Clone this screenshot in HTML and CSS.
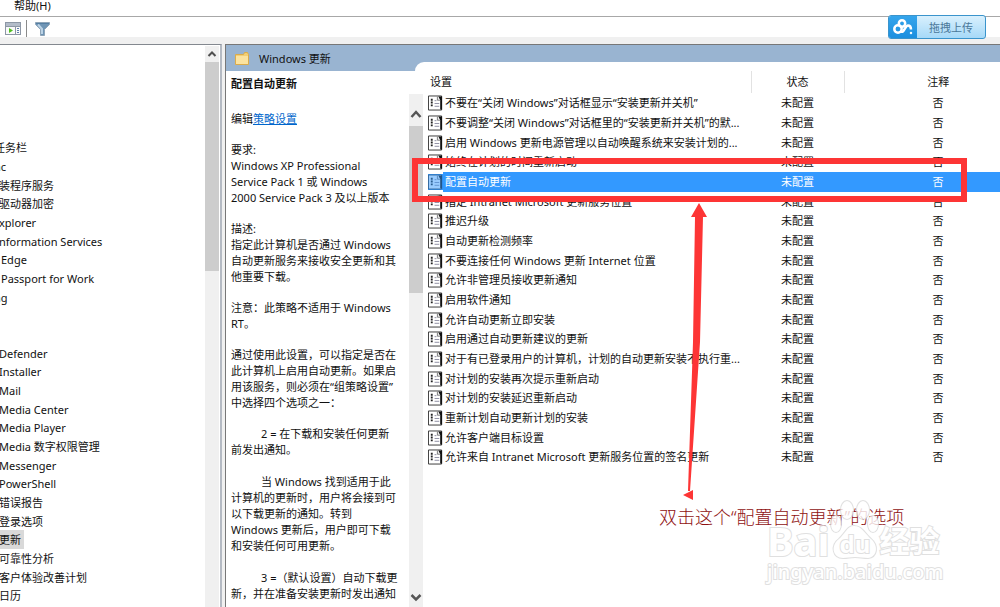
FILE: index.html
```
<!DOCTYPE html>
<html lang="zh-CN">
<head>
    <meta charset="UTF-8">
    <meta name="viewport" content="width=device-width, initial-scale=1.0">
    <title>本地组策略编辑器</title>
    <link rel="stylesheet" href="styles.css">
</head>
<body>
    <nav class="menubar"><a href="#">帮助(H)</a></nav>
    <div class="toolbar">
        <button class="tool" aria-label="显示/隐藏操作窗格">
            <svg width="16" height="14" viewBox="0 0 16 14">
                <rect x="0.5" y="0.5" width="15" height="12" fill="#fafafa" stroke="#8d97a5"/>
                <rect x="1" y="1" width="14" height="3" fill="#b3bcc9"/>
                <path d="M1 4.5h14M10.500 5v8" stroke="#8d97a5"/>
                <path d="M4 6l4 2.500l-4 2.500z" fill="#4fc021"/>
                <path d="M12 6.500h2M12 8.500h2M12 10.500h2" stroke="#5f7fae"/>
            </svg>
        </button>
        <span class="divider"></span>
        <button class="tool" aria-label="筛选器">
            <svg width="16" height="14" viewBox="0 0 16 14">
                <path d="M0.500 0.500h14v2l-5 5v6h-4v-6l-5-5z" fill="#6f95b5" stroke="#8fa5b8"/>
                <path d="M3 2.500l4 4.500v5" fill="none" stroke="#bcd3e6" stroke-width="2"/>
                <path d="M1 1.500h13" stroke="#557fa3"/>
            </svg>
        </button>
    </div>
    <button class="upload">
        <span class="upload-logo">
            <svg width="22" height="18" viewBox="0 0 22 18" fill="none" stroke="#fff" stroke-width="2.500">
                <circle cx="6" cy="11" r="3.700"/>
                <circle cx="10" cy="5.500" r="3.200"/>
                <path d="M9 13.500c3 2 4-6 7-6c2 0 3 1.500 3 4"/>
                <circle cx="19" cy="15" r="0.500" stroke-width="1.500"/>
            </svg>
        </span>
        <span class="upload-text">拖拽上传</span>
    </button>

    <main class="workspace">
        <div class="tree-pane">
            <ul class="tree">
                <li class="clipped">任务栏</li>
                <li class="clipped">nc</li>
                <li>装程序服务</li>
                <li>驱动器加密</li>
                <li>xplorer</li>
                <li>nformation Services</li>
                <li class="spaced">Edge</li>
                <li class="spaced">Passport for Work</li>
                <li class="clipped">ng</li>
                <li></li>
                <li></li>
                <li>Defender</li>
                <li>Installer</li>
                <li>Mail</li>
                <li>Media Center</li>
                <li>Media Player</li>
                <li>Media 数字权限管理</li>
                <li>Messenger</li>
                <li>PowerShell</li>
                <li>错误报告</li>
                <li>登录选项</li>
                <li><span class="current">更新</span></li>
                <li>可靠性分析</li>
                <li>客户体验改善计划</li>
                <li>日历</li>
            </ul>
            <div class="scrollbar tree-scroll">
                <svg class="arrow" width="14" height="16" viewBox="0 0 14 16"><path d="M3.500 10L7 6.500L10.500 10" fill="none" stroke="#505050" stroke-width="2"/></svg>
                <div class="thumb"></div>
            </div>
        </div>

        <div class="result-pane">
            <section class="side">
                <header class="title">
                    <svg width="14" height="13" viewBox="0 0 14 13">
                        <path d="M0.500 2.500h8l1-2h3l1 2v10h-13z" fill="#f3cf74" stroke="#d9ab4c"/>
                        <path d="M1 4h12v8h-12z" fill="#fbe3a0"/>
                    </svg>
                    <span>Windows 更新</span>
                    <i class="corner"></i>
                </header>
                <h2>配置自动更新</h2>
                <div class="description">
                    <div class="desc-text">
                        <p>编辑<a href="#">策略设置</a></p>
                        <p>要求:<br>Windows XP Professional<br>Service Pack 1 或 Windows<br>2000 Service Pack 3 及以上版本</p>
                        <p>描述:<br>指定此计算机是否通过 Windows<br>自动更新服务来接收安全更新和其<br>他重要下载。</p>
                        <p>注意：此策略不适用于 Windows<br>RT。</p>
                        <p>通过使用此设置，可以指定是否在<br>此计算机上启用自动更新。如果启<br>用该服务，则必须在“组策略设置”<br>中选择四个选项之一：</p>
                        <p class="option">2 = 在下载和安装任何更新<br>前发出通知。</p>
                        <p class="option">当 Windows 找到适用于此<br>计算机的更新时，用户将会接到可<br>以下载更新的通知。转到<br>Windows 更新后，用户即可下载<br>和安装任何可用更新。</p>
                        <p class="option">3 =（默认设置）自动下载更<br>新，并在准备安装更新时发出通知</p>
                    </div>
                    <div class="scrollbar">
                        <svg class="arrow" width="14" height="32" viewBox="0 0 14 32"><path d="M2.500 23L7 18L11.500 23" fill="none" stroke="#555" stroke-width="2.500"/></svg>
                        <div class="thumb"></div>
                        <svg class="arrow down" width="14" height="20" viewBox="0 0 14 20"><path d="M2.500 8L7 12.500L11.500 8" fill="none" stroke="#555" stroke-width="2.500"/></svg>
                    </div>
                </div>
            </section>

            <section class="list">
                <svg class="defs" width="0" height="0">
                    <symbol id="policy" viewBox="0 0 16 16">
                        <path d="M0.500 0.500h14v15h-14z" fill="#fff" stroke="#333"/>
                        <path d="M11 1h4v14h-2V5z" fill="#111"/>
                        <path d="M10 1v4h3" fill="#eee" stroke="#777"/>
                        <path d="M3 4.500h2M3 7.500h2M3 10.500h2" stroke="#222" stroke-width="2"/>
                        <path d="M7 5.500h2M7 8.500h5M7 11.500h5" stroke="#8a8aa0"/>
                    </symbol>
                </svg>
                <table>
                    <colgroup>
                        <col class="col-icon">
                        <col class="col-name">
                        <col class="col-state">
                        <col>
                    </colgroup>
                    <thead>
                        <tr><th class="name" colspan="2">设置</th><th class="state">状态</th><th class="note">注释</th></tr>
                    </thead>
                    <tbody>
                        <tr><td class="icon"><svg><use href="#policy"/></svg></td><td>不要在“关闭 Windows”对话框显示“安装更新并关机”</td><td class="state">未配置</td><td class="note">否</td></tr>
                        <tr><td class="icon"><svg><use href="#policy"/></svg></td><td>不要调整“关闭 Windows”对话框里的“安装更新并关机”的默...</td><td class="state">未配置</td><td class="note">否</td></tr>
                        <tr><td class="icon"><svg><use href="#policy"/></svg></td><td>启用 Windows 更新电源管理以自动唤醒系统来安装计划的...</td><td class="state">未配置</td><td class="note">否</td></tr>
                        <tr><td class="icon"><svg><use href="#policy"/></svg></td><td>始终在计划的时间重新启动</td><td class="state">未配置</td><td class="note">否</td></tr>
                        <tr class="selected"><td class="icon"><svg><use href="#policy"/></svg></td><td>配置自动更新</td><td class="state">未配置</td><td class="note">否</td></tr>
                        <tr><td class="icon"><svg><use href="#policy"/></svg></td><td>指定 Intranet Microsoft 更新服务位置</td><td class="state">未配置</td><td class="note">否</td></tr>
                        <tr><td class="icon"><svg><use href="#policy"/></svg></td><td>推迟升级</td><td class="state">未配置</td><td class="note">否</td></tr>
                        <tr><td class="icon"><svg><use href="#policy"/></svg></td><td>自动更新检测频率</td><td class="state">未配置</td><td class="note">否</td></tr>
                        <tr><td class="icon"><svg><use href="#policy"/></svg></td><td>不要连接任何 Windows 更新 Internet 位置</td><td class="state">未配置</td><td class="note">否</td></tr>
                        <tr><td class="icon"><svg><use href="#policy"/></svg></td><td>允许非管理员接收更新通知</td><td class="state">未配置</td><td class="note">否</td></tr>
                        <tr><td class="icon"><svg><use href="#policy"/></svg></td><td>启用软件通知</td><td class="state">未配置</td><td class="note">否</td></tr>
                        <tr><td class="icon"><svg><use href="#policy"/></svg></td><td>允许自动更新立即安装</td><td class="state">未配置</td><td class="note">否</td></tr>
                        <tr><td class="icon"><svg><use href="#policy"/></svg></td><td>启用通过自动更新建议的更新</td><td class="state">未配置</td><td class="note">否</td></tr>
                        <tr><td class="icon"><svg><use href="#policy"/></svg></td><td>对于有已登录用户的计算机，计划的自动更新安装不执行重...</td><td class="state">未配置</td><td class="note">否</td></tr>
                        <tr><td class="icon"><svg><use href="#policy"/></svg></td><td>对计划的安装再次提示重新启动</td><td class="state">未配置</td><td class="note">否</td></tr>
                        <tr><td class="icon"><svg><use href="#policy"/></svg></td><td>对计划的安装延迟重新启动</td><td class="state">未配置</td><td class="note">否</td></tr>
                        <tr><td class="icon"><svg><use href="#policy"/></svg></td><td>重新计划自动更新计划的安装</td><td class="state">未配置</td><td class="note">否</td></tr>
                        <tr><td class="icon"><svg><use href="#policy"/></svg></td><td>允许客户端目标设置</td><td class="state">未配置</td><td class="note">否</td></tr>
                        <tr><td class="icon"><svg><use href="#policy"/></svg></td><td>允许来自 Intranet Microsoft 更新服务位置的签名更新</td><td class="state">未配置</td><td class="note">否</td></tr>
                    </tbody>
                </table>
            </section>
        </div>
    </main>

    <!-- annotations over the window -->
    <div class="mark-box"></div>
    <svg class="mark-arrow" width="30" height="300" viewBox="0 0 30 300" fill="#fd3535">
        <path d="M19 1L27 15L23 15L20 140L10 289L8 289L13 140L15 15L11 15z"/>
        <path d="M3 293L13 288V298z"/>
    </svg>
    <p class="mark-text">双击这个“配置自动更新”的选项</p>
    <div class="watermark">
        <div class="brand">
            <span class="bai">Bai</span>
            <svg width="50" height="60" viewBox="0 0 50 60" fill="#fff" stroke="#d9d9d9" stroke-width="2">
                <ellipse cx="6" cy="24" rx="5" ry="8"/>
                <ellipse cx="17" cy="10" rx="6" ry="9"/>
                <ellipse cx="33" cy="10" rx="6" ry="9"/>
                <ellipse cx="43" cy="24" rx="5" ry="8"/>
                <path d="M24 26C17 26 15 34 9 39C0 46 3 58 13 58C18 58 20 57 25 57C30 57 33 58 38 58C47 57 49 46 41 39C35 34 32 26 24 26z"/>
                <text x="25" y="53" text-anchor="middle" font-size="24">du</text>
            </svg>
            <span class="jingyan">经验</span>
        </div>
        <div class="site">jingyan.baidu.com</div>
    </div>
</body>
</html>
```
FILE: styles.css
```
* {
    box-sizing: border-box;
}
body {
    margin: 0;
    height: 100vh;
    display: flex;
    flex-direction: column;
    overflow: hidden;
    position: relative;
    background: #f0f0f0;
    color: #111;
    font-family: "Noto Sans", "Noto Sans CJK SC", sans-serif;
    font-size: 11px;
    line-height: 16px;
}
ul, p, h2 {
    margin: 0;
    padding: 0;
}
button {
    font: inherit;
    padding: 0;
    border: none;
    background: none;
}
.menubar {
    height: 17px;
    padding-left: 14px;
    background: #fff;
    border-bottom: 1px solid #a8a8a8;
    line-height: 12px;
}
.menubar a {
    color: #111;
    text-decoration: none;
}
.toolbar {
    height: 20px;
    display: flex;
    align-items: center;
    gap: 5px;
    padding: 3px 0 0 5px;
    background: #fff;
}
.tool {
    display: flex;
}
.divider {
    width: 1px;
    height: 17px;
    background: #8a8a8a;
    margin-right: 3px;
}
.upload {
    position: absolute;
    top: 15px;
    right: 14px;
    width: 98px;
    height: 24px;
    display: flex;
    border: 1px solid #3a94cc;
    border-radius: 3px;
    overflow: hidden;
    background: linear-gradient(#d9f0fd, #a6d9f8);
}
.upload-logo {
    display: flex;
    align-items: center;
    justify-content: center;
    width: 28px;
    height: 22px;
    background: linear-gradient(#35a5ec, #1b8fdf);
}
.upload-text {
    flex: 1;
    line-height: 24px;
    color: #4a7899;
}
.workspace {
    flex: 1;
    min-height: 0;
    margin-top: 7px;
    display: grid;
    grid-template-columns: 222px 1fr;
    gap: 3px;
}

/* left tree */
.tree-pane {
    display: flex;
    overflow: hidden;
    background: #fff;
    border-top: 1px solid #83888f;
    border-right: 2px solid #b4bac3;
}
.tree {
    flex: 1;
    padding-top: 93px;
    list-style: none;
    white-space: nowrap;
}
.tree li {
    height: 19px;
    line-height: 19px;
    margin-left: -1px;
}
.tree li:nth-child(3n) {
    height: 18px;
}
.tree .clipped {
    margin-left: -6px;
}
.tree .spaced {
    margin-left: 1px;
}
.current {
    display: inline-block;
    padding-right: 3px;
    background: #d9d9d9;
}
.scrollbar {
    width: 14px;
    display: flex;
    flex-direction: column;
    background: #f0f0f0;
}
.arrow {
    flex: none;
}
.thumb {
    height: 167px;
    background: #cdcdcd;
}
.tree-scroll {
    margin: 1px 1px 0 0;
}
.tree-scroll .thumb {
    height: 209px;
}

/* right side */
.result-pane {
    display: grid;
    grid-template-columns: 198px 1fr;
    min-height: 0;
    border-top: 1px solid #777;
    border-left: 1px solid #777;
    background: #99b4d1;
}
.side {
    display: flex;
    flex-direction: column;
    min-height: 0;
    background: #fff;
}
.title {
    flex: none;
    height: 26px;
    display: flex;
    align-items: center;
    gap: 10px;
    padding-left: 9px;
    background: #99b4d1;
}
.title span {
    padding-top: 2px;
}
.corner {
    width: 9px;
    height: 9px;
    margin-left: auto;
    align-self: flex-end;
    background: #fff;
    border-top-left-radius: 9px;
}
.side h2 {
    flex: none;
    height: 23px;
    padding-left: 5px;
    font-size: 11px;
    line-height: 26px;
}
.description {
    flex: 1;
    min-height: 0;
    display: flex;
    overflow: hidden;
}
.desc-text {
    flex: 1;
    padding: 17px 0 0 5px;
    white-space: nowrap;
}
.desc-text p {
    margin-bottom: 15px;
}
.desc-text a {
    color: #0066cc;
}
.desc-text .option {
    margin-bottom: 16px;
    text-indent: 30px;
}
.description .scrollbar {
    margin-right: 1px;
}
.down {
    margin-top: auto;
}
.list {
    margin-top: 17px;
    padding-top: 9px;
    overflow: hidden;
    background: #fff;
}
.defs {
    position: absolute;
}
table {
    width: 100%;
    table-layout: fixed;
    border-collapse: collapse;
}
.col-icon {
    width: 19px;
}
.col-name {
    width: 308px;
}
.col-state {
    width: 93px;
}
th {
    height: 22px;
    padding: 0;
    font-weight: normal;
    border-right: 1px solid #e2e2e2;
}
th.name {
    padding-left: 6px;
    text-align: left;
}
th.note {
    border-right: none;
}
td {
    height: 20px;
    padding: 0 0 0 2px;
    line-height: 18px;
    white-space: nowrap;
}
tbody tr:nth-child(3n) td {
    height: 19px;
}
td.state {
    padding: 0;
}
.state {
    text-align: center;
}
td.note, th.note {
    padding-left: 32px;
    text-align: center;
}
td.icon {
    padding-left: 4px;
}
.icon svg {
    display: block;
    width: 15px;
    height: 16px;
}
.selected td {
    background: #3399ff;
    color: #fff;
}
.selected .icon {
    background: #fff;
}
.selected .icon svg {
    background: #3399ff;
}
.selected use {
    opacity: 0.5;
}

/* annotations */
.mark-box {
    position: absolute;
    top: 158px;
    left: 412px;
    width: 555px;
    height: 44px;
    border: 6px solid #fd3535;
}
.mark-arrow {
    position: absolute;
    top: 202px;
    left: 680px;
}
.mark-text {
    position: absolute;
    top: 505px;
    left: 659px;
    font-size: 18px;
    line-height: 24px;
    font-weight: 300;
    color: #8f1212;
    white-space: nowrap;
}
.watermark {
    position: absolute;
    top: 500px;
    left: 767px;
    opacity: 0.8;
    color: #fff;
    font-family: "Noto Sans", "Noto Sans CJK SC", sans-serif;
    font-weight: bold;
    -webkit-text-stroke: 2px #d9d9d9;
    paint-order: stroke fill;
    white-space: nowrap;
}
.brand {
    display: flex;
    align-items: flex-end;
}
.bai {
    font-size: 40px;
    line-height: 38px;
}
.jingyan {
    font-size: 30px;
    line-height: 38px;
}
.site {
    font-size: 20px;
    font-weight: 500;
    line-height: 24px;
}
```
